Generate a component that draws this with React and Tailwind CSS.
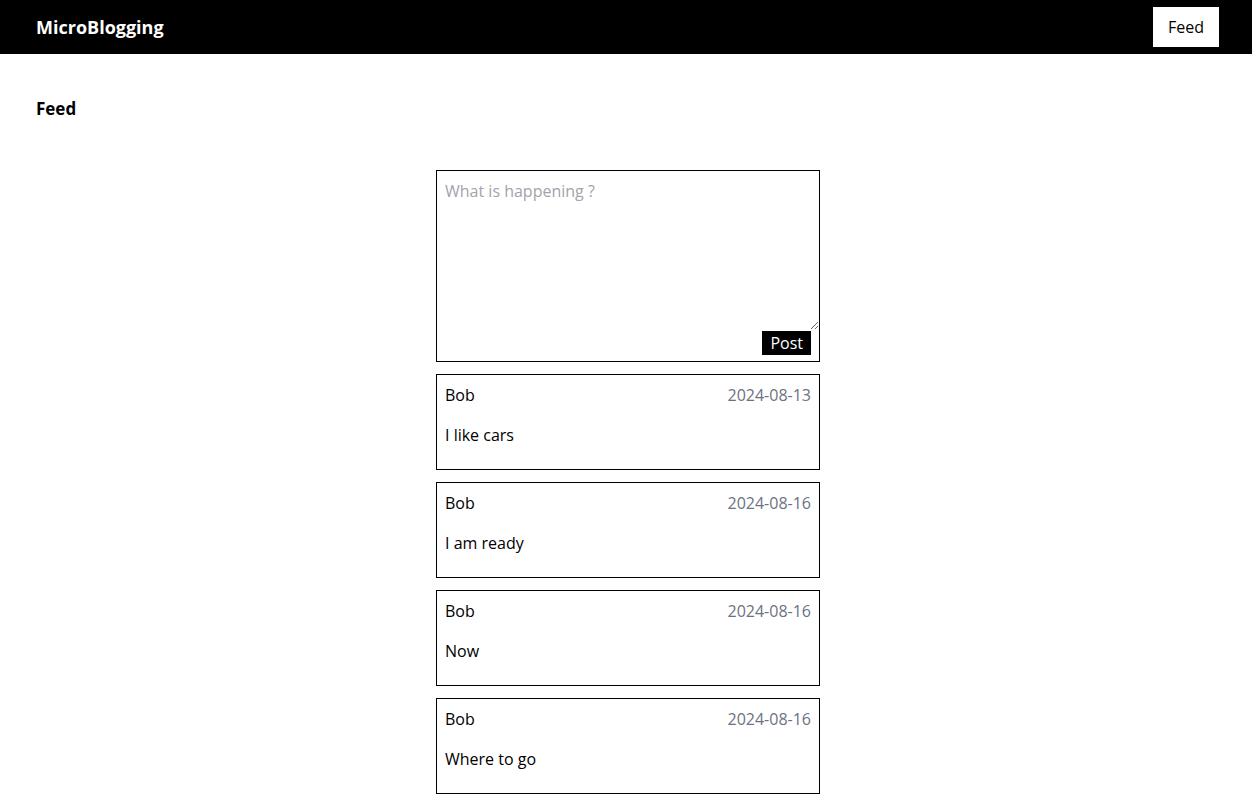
import { useState } from 'react';

const posts = [
  { id: 1, author: 'Bob', date: '2024-08-13', text: 'I like cars' },
  { id: 2, author: 'Bob', date: '2024-08-16', text: 'I am ready' },
  { id: 3, author: 'Bob', date: '2024-08-16', text: 'Now' },
  { id: 4, author: 'Bob', date: '2024-08-16', text: 'Where to go' },
];

export default function App() {
  const [draft, setDraft] = useState('');

  return (
    <div className="min-h-screen bg-white text-black" style={{ fontFamily: '"Segoe UI", "Open Sans", sans-serif' }}>
      <nav className="h-[54px] bg-black flex items-center justify-between pl-9 pr-[33px]">
        <div className="text-white font-bold text-lg">MicroBlogging</div>
        <button className="bg-white text-black text-base px-[15px] h-10">Feed</button>
      </nav>

      <div className="px-9 pt-[41px]">
        <h1 className="font-bold text-[17px] leading-7">Feed</h1>
      </div>

      <div className="flex flex-col items-center gap-3 mt-[47px] pb-2 pl-1">
        {/* Composer */}
        <div className="w-[384px] border border-black flex flex-col">
          <textarea value={draft} onChange={e => setDraft(e.target.value)} placeholder="What is happening ?"
            className="w-full h-[159px] p-2 text-base leading-6 outline-none placeholder:text-[#a3a3ab]" />
          <div className="flex justify-end pr-2 pb-[6px] pt-px">
            <button className="bg-black text-white text-base leading-6 px-2 h-6">Post</button>
          </div>
        </div>

        {posts.map(p => (
          <div key={p.id} className="w-[384px] border border-black pt-2 px-2 pb-[6px]">
            <div className="flex justify-between leading-6">
              <span>{p.author}</span>
              <span className="text-[#6b7280]">{p.date}</span>
            </div>
            <p className="my-4 leading-6">{p.text}</p>
          </div>
        ))}
      </div>
    </div>
  );
}
